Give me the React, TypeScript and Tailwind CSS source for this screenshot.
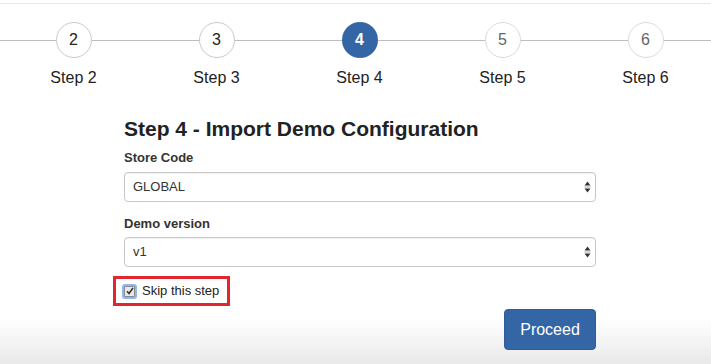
import { ChangeEvent, useState } from "react";

type Step = {
  n: number;
  state: "done" | "active" | "todo";
};

const steps: Step[] = [
  { n: 2, state: "done" },
  { n: 3, state: "done" },
  { n: 4, state: "active" },
  { n: 5, state: "todo" },
  { n: 6, state: "todo" },
];

const SelectArrows = () => (
  <svg width="7" height="12" viewBox="0 0 7 12" className="text-[#333]">
    <path d="M3.5 0.5 L6.5 4.5 L0.5 4.5 Z" fill="currentColor" />
    <rect x="0.5" y="5.6" width="6" height="0.8" fill="#999" />
    <path d="M3.5 11.5 L6.5 7.5 L0.5 7.5 Z" fill="currentColor" />
  </svg>
);

const Select = ({
  value,
  options,
  onChange,
}: {
  value: string;
  options: string[];
  onChange: (v: string) => void;
}) => {
  return (
    <div className="relative h-[30px] w-full rounded-[4px] border border-[#c8c8c8] bg-white shadow-[inset_0_1px_1px_rgba(0,0,0,0.06)]">
      <select
        value={value}
        onChange={(e: ChangeEvent<HTMLSelectElement>) => onChange(e.target.value)}
        className="h-full w-full appearance-none bg-transparent pl-[8px] text-[13px] text-[#333] outline-none"
      >
        {options.map((o) => (
          <option key={o}>{o}</option>
        ))}
      </select>
      <div className="pointer-events-none absolute right-[4px] top-[8px]">
        <SelectArrows />
      </div>
    </div>
  );
};

const App = () => {
  const [storeCode, setStoreCode] = useState("GLOBAL");
  const [version, setVersion] = useState("v1");
  const [skip, setSkip] = useState(true);

  return (
    <div className="h-[364px] w-full overflow-hidden bg-[linear-gradient(180deg,#ffffff_0px,#ffffff_318px,#e9e9e9_364px)] font-['Liberation_Sans',Arial,sans-serif] text-[#333]">
      <div className="h-[3px]" />
      <div className="h-px bg-[#e8e8e8]" />

      {/* stepper */}
      <div className="mt-[18px] flex">
        <div className="mt-[18px] h-px w-[2px] shrink-0 bg-[#bdbdbd]" />
        {steps.map((s) => (
          <div key={s.n} className="flex w-[143px] shrink-0 flex-col items-center">
            <div className="flex w-full items-center">
              <div className="h-px flex-1 bg-[#bdbdbd]" />
              {s.state === "active" ? (
                <div className="flex h-9 w-9 items-center justify-center rounded-full bg-[#3466a5] text-[16px] font-bold text-white">
                  {s.n}
                </div>
              ) : (
                <div
                  className={
                    s.state === "done"
                      ? "flex h-9 w-9 items-center justify-center rounded-full border border-[#c9c9c9] bg-white text-[16px] text-[#222]"
                      : "flex h-9 w-9 items-center justify-center rounded-full border border-[#dadada] bg-white text-[16px] text-[#666]"
                  }
                >
                  {s.n}
                </div>
              )}
              <div className="h-px flex-1 bg-[#bdbdbd]" />
            </div>
            <div className="mt-[10px] text-[16px] leading-5 text-[#222]">Step {s.n}</div>
          </div>
        ))}
      </div>

      <div className="ml-[124px] w-[472px]">
        <h3 className="mt-[29px] text-[21px] font-bold leading-[23px] text-[#222]">
          Step 4 - Import Demo Configuration
        </h3>

        <div className="mb-[6px] mt-[10px] text-[13px] font-bold leading-4">Store Code</div>
        <Select value={storeCode} options={["GLOBAL", "DEFAULT"]} onChange={setStoreCode} />

        <div className="mb-[5px] mt-[14px] text-[13px] font-bold leading-4">Demo version</div>
        <Select value={version} options={["v1", "v2"]} onChange={setVersion} />

        <label className="-ml-[11px] mt-[9px] flex h-[30px] w-[117px] cursor-pointer items-center border-[3px] border-[#e1262d] pl-[6px]">
          <input
            type="checkbox"
            checked={skip}
            onChange={() => setSkip(!skip)}
            className="hidden"
          />
          <span className="flex h-[15px] w-[15px] items-center justify-center rounded-[3px] bg-[#8db8f2] p-[2px]">
            <span className="flex h-full w-full items-center justify-center rounded-[1px] border border-[#8a8a8a] bg-[#e9e9e9]">
              {skip && (
                <svg width="8" height="8" viewBox="0 0 8 8">
                  <path d="M1 4.2 L3 6.5 L7 1" stroke="#333" strokeWidth="1.6" fill="none" />
                </svg>
              )}
            </span>
          </span>
          <span className="ml-[5px] text-[13px] text-[#222]">Skip this step</span>
        </label>

        <div className="mt-[3px] flex justify-end">
          <button className="h-[41px] w-[92px] rounded-[4px] border border-[#2f5d97] bg-[#3466a5] text-[16px] text-white">
            Proceed
          </button>
        </div>
      </div>
    </div>
  );
};

export default App;
